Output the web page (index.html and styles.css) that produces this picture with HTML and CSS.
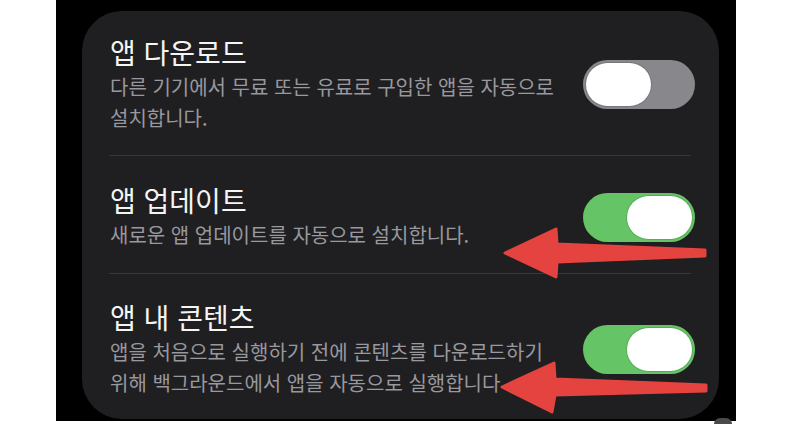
FILE: index.html
```html
<!DOCTYPE html>
<html lang="ko">
<head>
    <meta charset="UTF-8">
    <meta name="viewport" content="width=device-width, initial-scale=1.0">
    <title>앱 설정</title>
    <link rel="stylesheet" href="styles.css">
</head>
<body>
    <div class="frame">
        <div class="card">
            <div class="row row-first">
                <div class="text">
                    <div class="title">앱 다운로드</div>
                    <div class="desc">다른 기기에서 무료 또는 유료로 구입한 앱을 자동으로 설치합니다.</div>
                </div>
                <div class="toggle"><span class="knob"></span></div>
            </div>
            <div class="sep"></div>
            <div class="row row-mid">
                <div class="text">
                    <div class="title">앱 업데이트</div>
                    <div class="desc">새로운 앱 업데이트를 자동으로 설치합니다.</div>
                </div>
                <div class="toggle on"><span class="knob"></span></div>
            </div>
            <div class="sep"></div>
            <div class="row row-last">
                <div class="text">
                    <div class="title">앱 내 콘텐츠</div>
                    <div class="desc">앱을 처음으로 실행하기 전에 콘텐츠를 다운로드하기 위해 백그라운드에서 앱을 자동으로 실행합니다</div>
                </div>
                <div class="toggle on"><span class="knob"></span></div>
            </div>
        </div>
    </div>

    <span class="dot"></span>

    <!-- red annotation arrows drawn over the screenshot -->
    <svg class="arrows" width="809" height="432" viewBox="0 0 809 432">
        <polygon points="505,253 556,229 557,244 705,250 705,256 557,262 556,277" />
        <polygon points="502,387 554,363 555,379 706,385 706,391 555,395 552,412" />
    </svg>
</body>
</html>
```

FILE: styles.css
```css
html, body {
    margin: 0;
    padding: 0;
}
body {
    position: relative;
    width: 809px;
    height: 432px;
    background: #fff;
    font-family: "Noto Sans CJK KR", "Noto Sans", sans-serif;
    overflow: hidden;
}
.frame {
    margin-left: 56px;
    width: 680px;
    height: 421px;
    box-sizing: border-box;
    padding: 11px 17px 2px 26px;
    background: #000;
}
.card {
    height: 408px;
    background: #1f1f21;
    border-radius: 40px;
}
.row {
    display: flex;
    align-items: center;
    gap: 22px;
    padding-left: 28px;
    padding-right: 24px;
}
.row-first {
    padding-top: 25px;
    padding-bottom: 22px;
}
.row-mid {
    padding-top: 28px;
    padding-bottom: 23px;
}
.row-last {
    padding-top: 27px;
    padding-bottom: 20px;
}
.text {
    flex: 1;
    word-break: keep-all;
}
.title {
    font-size: 28px;
    line-height: 32px;
    color: #f4f4f5;
    margin-bottom: 3px;
}
.desc {
    font-size: 20px;
    line-height: 31px;
    color: #98989e;
}
.sep {
    height: 1px;
    margin: 0 28px 0 27px;
    background: #38383b;
}
.toggle {
    flex: none;
    width: 112px;
    height: 49px;
    border-radius: 25px;
    background: #88878c;
    box-sizing: border-box;
    padding: 3px;
    display: flex;
}
.toggle.on {
    background: #65c466;
    justify-content: flex-end;
}
.knob {
    width: 65px;
    height: 43px;
    border-radius: 22px;
    background: #fff;
    box-shadow: 0 0 0 1px rgba(0, 0, 0, 0.12);
}
.dot {
    position: absolute;
    left: 714px;
    top: 418px;
    width: 18px;
    height: 6px;
    border-radius: 9px 9px 0 0;
    background: #4a4a4d;
}
.arrows {
    position: absolute;
    left: 0;
    top: 0;
    pointer-events: none;
}
.arrows polygon {
    fill: #e4433f;
    stroke: #e4433f;
    stroke-width: 3;
    stroke-linejoin: round;
}
```
